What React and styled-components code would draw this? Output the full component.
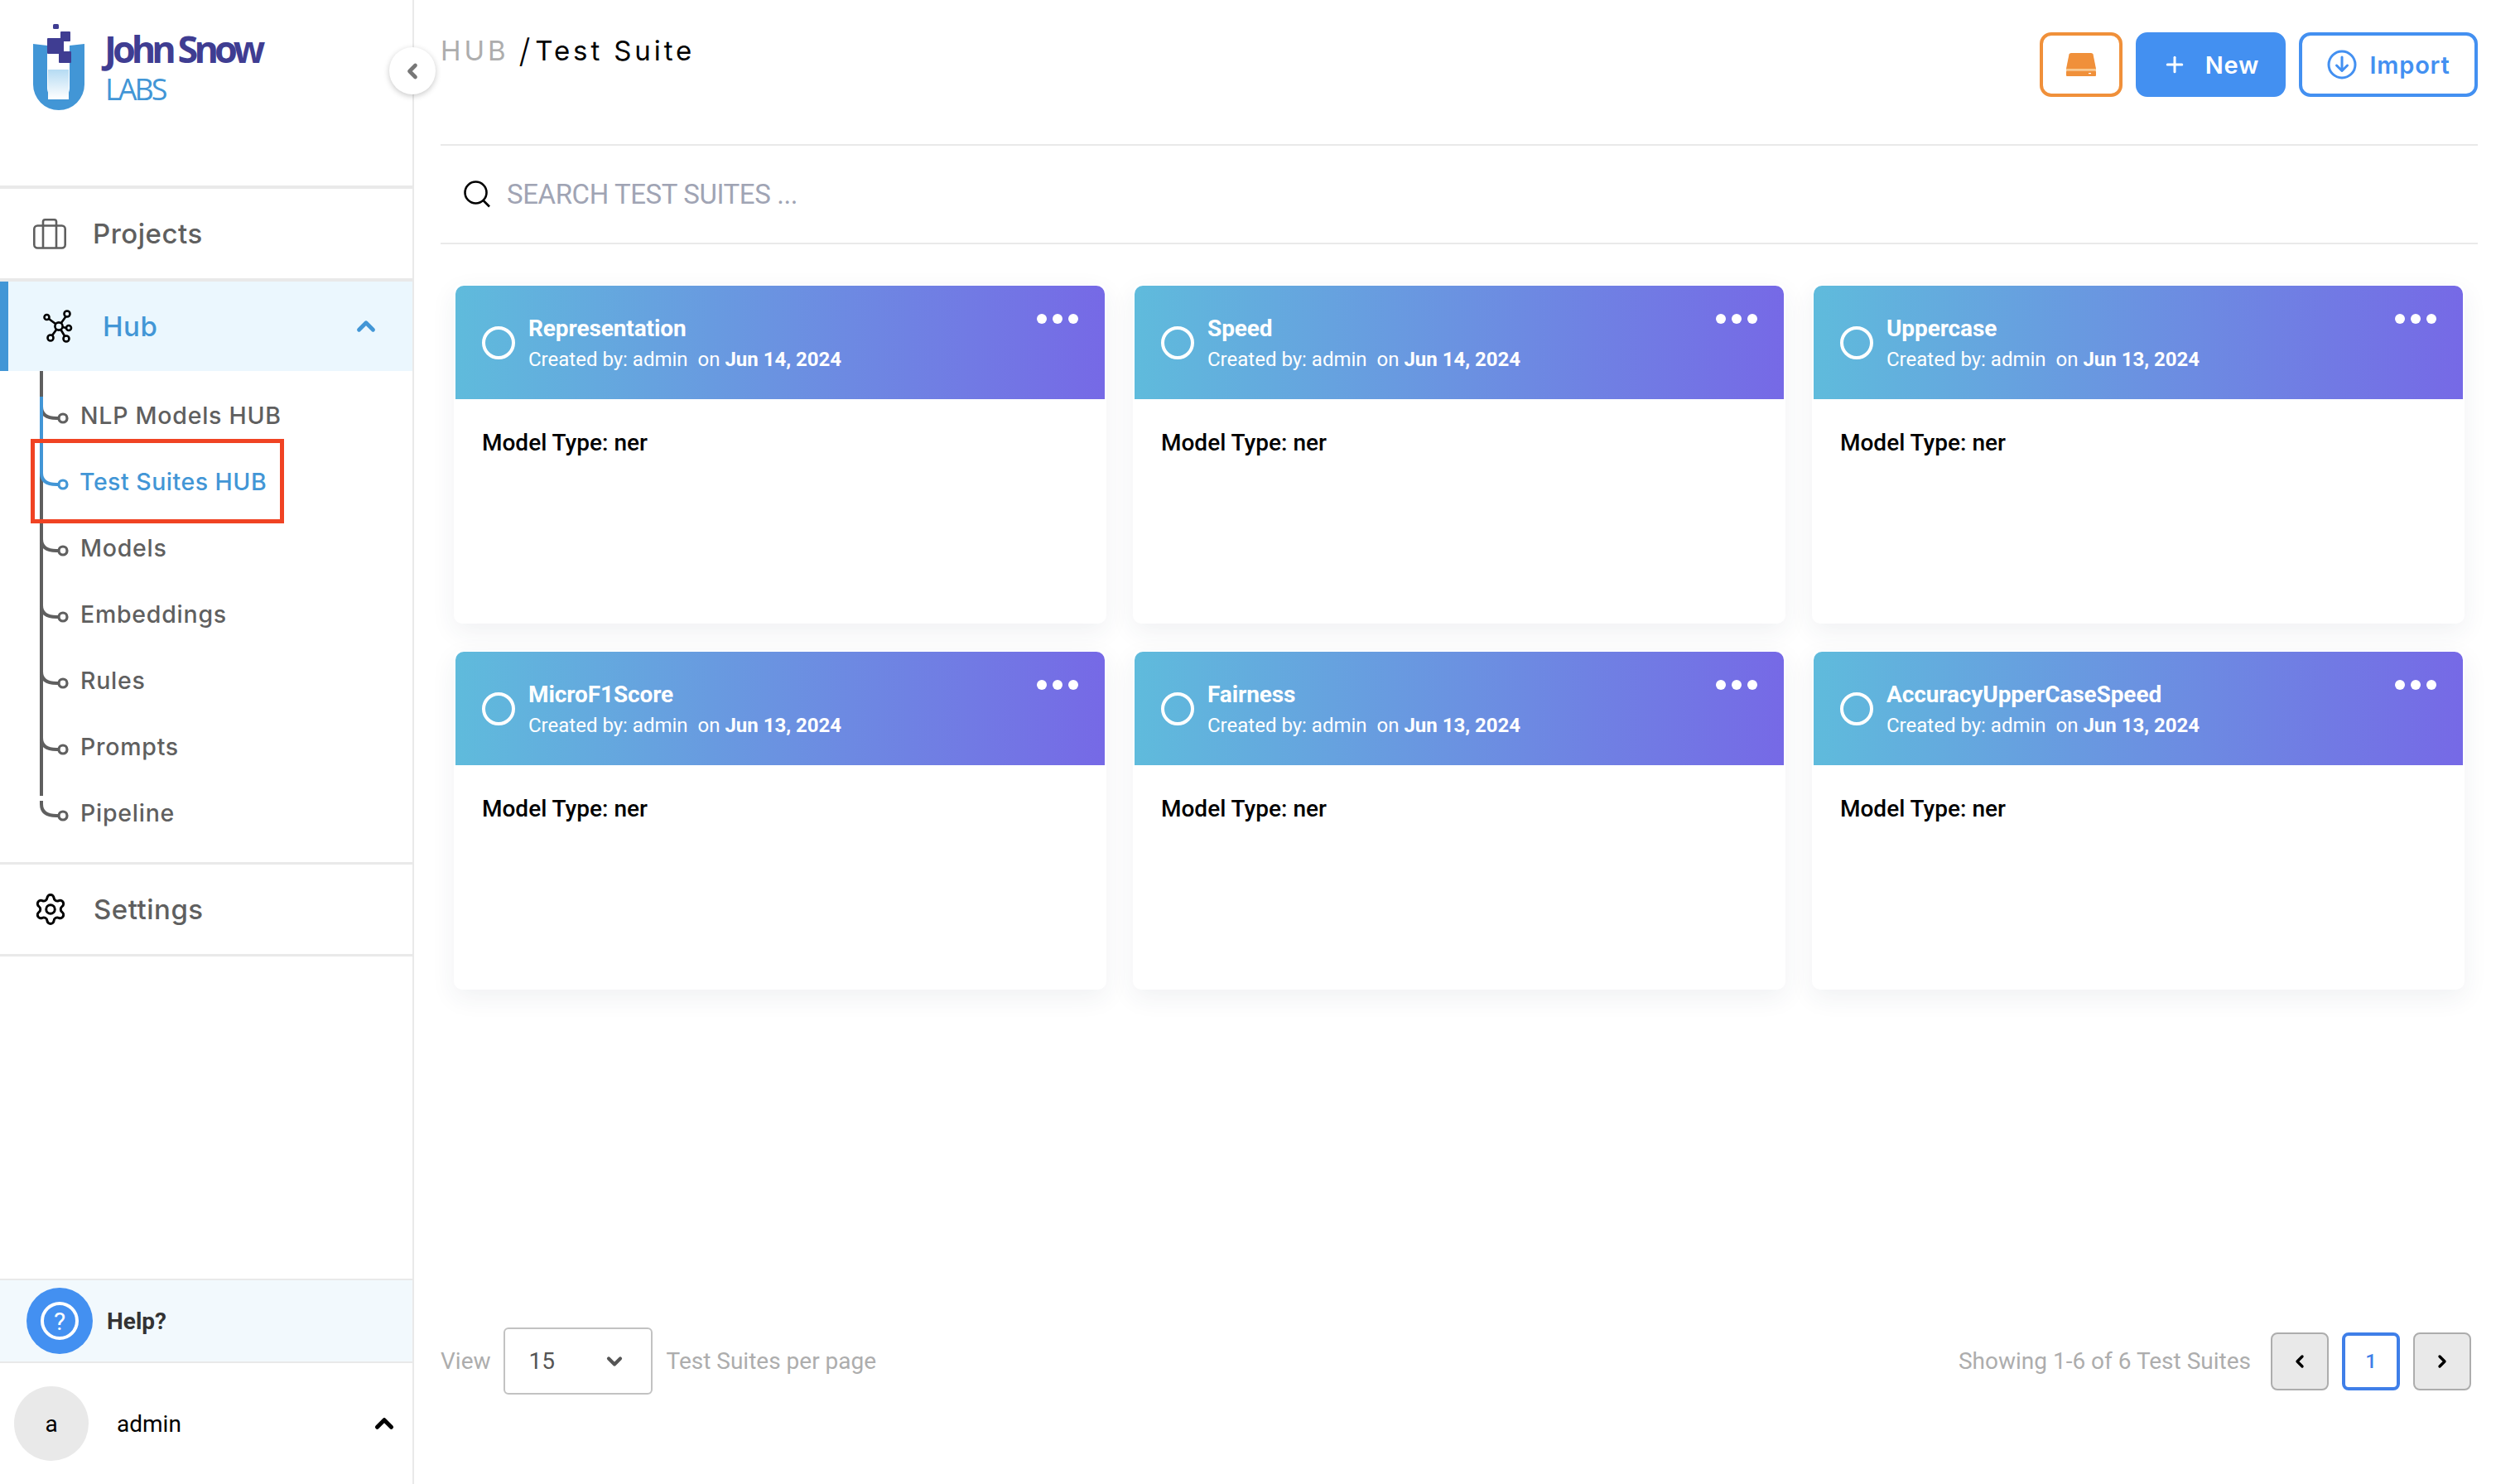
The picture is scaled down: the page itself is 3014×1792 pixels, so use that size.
import React from 'react';
import styled, { createGlobalStyle } from 'styled-components';
import { ChevronDown, ChevronLeft, ChevronRight, ChevronUp, Plus, Settings } from 'lucide-react';

const colors = {
  blue: '#4296d6',
  brand: '#4390f1',
  indigo: '#3f3d92',
  text: '#5f5f5f',
  line: '#e9e9e9',
  muted: '#adadad',
};

const sans = '"Inter", "Liberation Sans", sans-serif';
const roboto = 'Roboto, "Liberation Sans", sans-serif';

const GlobalStyle = createGlobalStyle`
  html, body {
    margin: 0;
    padding: 0;
    background: #fff;
    overflow: hidden;
  }
  * {
    box-sizing: border-box;
  }
`;

const Page = styled.div`
  display: flex;
  width: 3014px;
  height: 1792px;
  font-family: ${roboto};
`;

const Sidebar = styled.aside`
  position: relative;
  display: flex;
  flex-direction: column;
  flex: 0 0 500px;
  height: 100%;
  border-right: 2px solid ${colors.line};
`;

const LogoArea = styled.div`
  display: flex;
  gap: 24px;
  height: 224px;
  padding: 28px 0 0 40px;
`;

const LogoWords = styled.div`
  display: flex;
  flex-direction: column;
  padding-top: 6px;
`;

const LogoName = styled.span`
  font-family: "Open Sans", sans-serif;
  font-size: 45px;
  font-weight: 700;
  line-height: 50px;
  letter-spacing: -5px;
  color: ${colors.indigo};
`;

const LogoLabs = styled.span`
  font-family: "Open Sans", sans-serif;
  font-size: 36px;
  font-weight: 400;
  line-height: 48px;
  letter-spacing: -3px;
  color: ${colors.blue};
  margin-left: 1px;
`;

const CollapseButton = styled.button`
  position: absolute;
  top: 57px;
  right: -28px;
  z-index: 3;
  display: flex;
  align-items: center;
  justify-content: center;
  width: 56px;
  height: 57px;
  padding: 0;
  border: 0;
  border-radius: 50%;
  background: #fff;
  color: #777;
  box-shadow: 0 2px 7px rgba(0, 0, 0, 0.22);
`;

const NavRow = styled.div`
  display: flex;
  align-items: center;
  height: 112px;
  padding-left: 40px;
  border-top: 4px solid ${colors.line};
  background: #fff;
  color: ${colors.text};
`;

const ActiveBand = styled(NavRow)`
  padding: 0;
`;

const ActiveFill = styled.div`
  display: flex;
  align-items: center;
  width: 100%;
  height: 100%;
  padding: 0 39px 0 42px;
  border-left: 10px solid ${colors.blue};
  background: #ebf7fe;
  color: ${colors.blue};
`;

const NavLabel = styled.span`
  margin-left: ${p => p.$gap || 32}px;
  font-family: ${sans};
  font-size: 33px;
  font-weight: 500;
  letter-spacing: 0.5px;
  flex: ${p => p.$grow ? 1 : 'none'};
`;

const TreeList = styled.div`
  position: relative;
  display: flex;
  flex-direction: column;
  flex: 0 0 593px;
  padding-top: 13px;

  &::before {
    content: "";
    position: absolute;
    left: 48px;
    top: 0;
    bottom: 80px;
    width: 4px;
    background: ${colors.text};
  }
`;

const TreeItem = styled.div`
  position: relative;
  display: flex;
  align-items: center;
  height: 80px;
  color: ${p => p.$active ? colors.blue : colors.text};
`;

const Branch = styled.svg`
  position: relative;
  flex: 0 0 97px;
  width: 97px;
  height: 80px;
  overflow: visible;
`;

const TreeLabel = styled.span`
  font-family: ${sans};
  font-size: 28.5px;
  font-weight: 500;
  letter-spacing: ${p => p.$active ? 0.5 : 0.75}px;
  margin-left: ${p => p.$active ? -1 : 0}px;
`;

const Annotation = styled.div`
  position: absolute;
  left: 37px;
  top: -11px;
  width: 306px;
  height: 102px;
  border: 5px solid #f04323;
`;

const SettingsRow = styled(NavRow)`
  height: 114px;
  border-top-width: 3px;
  border-bottom: 3px solid ${colors.line};
`;

const HelpBand = styled.div`
  display: flex;
  align-items: center;
  gap: 17px;
  margin-top: auto;
  height: 102px;
  padding-left: 32px;
  border-top: 2px solid ${colors.line};
  border-bottom: 2px solid ${colors.line};
  background: #f2f9fd;
  font-size: 28px;
  font-weight: 700;
  color: #333;
`;

const HelpDisc = styled.div`
  display: flex;
  align-items: center;
  justify-content: center;
  width: 80px;
  height: 80px;
  border-radius: 50%;
  background: ${colors.brand};
`;

const HelpRing = styled.div`
  display: flex;
  align-items: center;
  justify-content: center;
  width: 46px;
  height: 46px;
  border: 4px solid #fff;
  border-radius: 50%;
  color: #fff;
  font-size: 30px;
  font-weight: 400;
`;

const UserRow = styled.div`
  display: flex;
  align-items: center;
  height: 146px;
  padding: 0 17px;
  font-size: 28px;
  color: #000;
`;

const Avatar = styled.div`
  display: flex;
  align-items: center;
  justify-content: center;
  width: 90px;
  height: 90px;
  margin-right: 34px;
  border-radius: 50%;
  background: ${colors.line};
`;

const UserName = styled.span`
  flex: 1;
`;

const Main = styled.main`
  display: flex;
  flex-direction: column;
  flex: 1;
  min-width: 0;
  padding: 0 22px 0 32px;
`;

const TopBar = styled.header`
  display: flex;
  justify-content: space-between;
  height: 176px;
  padding-top: 39px;
  border-bottom: 2px solid ${colors.line};
`;

const Crumbs = styled.div`
  display: flex;
  align-items: center;
  height: 44px;
  font-family: ${sans};
  font-size: 33px;
  letter-spacing: 3.9px;
  color: #000;
`;

const CrumbRoot = styled.span`
  color: ${colors.muted};
  margin-right: 12px;
`;

const CrumbSlash = styled.span`
  font-size: 40px;
  font-weight: 300;
  margin-right: 6px;
  letter-spacing: 0;
`;

const Actions = styled.div`
  display: flex;
  gap: 16px;
`;

const ActionButton = styled.button`
  display: flex;
  align-items: center;
  justify-content: center;
  gap: ${p => p.$gap || 0}px;
  width: ${p => p.$width}px;
  height: 78px;
  padding: 0;
  border: 4px solid ${p => p.$color};
  border-radius: 14px;
  background: ${p => p.$solid ? p.$color : '#fff'};
  color: ${p => p.$solid ? '#fff' : p.$color};
  font-family: ${sans};
  font-size: 29px;
  font-weight: 600;
  letter-spacing: 0.8px;
`;

const SearchBar = styled.div`
  display: flex;
  align-items: center;
  gap: 19px;
  height: 119px;
  padding-left: 28px;
  border-bottom: 2px solid ${colors.line};
`;

const SearchHint = styled.span`
  font-size: 33px;
  color: #a0a4b4;
  letter-spacing: -0.4px;
`;

const CardGrid = styled.section`
  display: grid;
  grid-template-columns: repeat(3, 1fr);
  gap: 32px;
  padding: 48px 16px 0;
`;

const Card = styled.article`
  height: 410px;
  padding: 2px 2px 0;
  border-radius: 10px;
  background: #fff;
  box-shadow: 0 10px 30px rgba(40, 50, 90, 0.07);
`;

const CardHeader = styled.div`
  display: flex;
  align-items: center;
  gap: 16px;
  height: 137px;
  padding: 0 32px;
  border-radius: 10px 10px 0 0;
  background: linear-gradient(90deg, #5fbbdc 0%, #7669e6 100%);
  color: #fff;
`;

const Radio = styled.span`
  flex: none;
  width: 40px;
  height: 40px;
  border: 4px solid #fff;
  border-radius: 50%;
`;

const CardTitles = styled.div`
  display: flex;
  flex-direction: column;
  gap: 6px;
  flex: 1;
  padding-top: 2px;
`;

const CardTitle = styled.span`
  font-size: 28px;
  font-weight: 700;
  line-height: 32px;
  letter-spacing: -0.1px;
`;

const CardMeta = styled.span`
  font-size: 24px;
  line-height: 30px;
  white-space: pre;

  b {
    font-weight: 700;
  }
`;

const Dots = styled.div`
  display: flex;
  gap: 7px;
  align-self: flex-start;
  padding-top: 34px;
`;

const Dot = styled.span`
  width: 12px;
  height: 12px;
  border-radius: 50%;
  background: #fff;
`;

const CardBody = styled.div`
  padding: 33px 32px;
  font-size: 28px;
  font-weight: 500;
  line-height: 40px;
  color: #000;
`;

const Footer = styled.footer`
  display: flex;
  align-items: center;
  justify-content: space-between;
  margin-top: auto;
  padding: 0 8px 108px 0;
`;

const PerPage = styled.div`
  display: flex;
  align-items: center;
  gap: 15px;
  font-size: 28px;
  color: ${colors.muted};
`;

const SelectBox = styled.div`
  display: flex;
  align-items: center;
  justify-content: space-between;
  width: 180px;
  height: 81px;
  margin-right: 2px;
  padding: 0 30px 0 29px;
  border: 2px solid #c2c2c2;
  border-radius: 6px;
  color: #555;
`;

const Pager = styled.div`
  display: flex;
  align-items: center;
  gap: 16px;
  font-size: 28px;
  color: ${colors.muted};
`;

const PageCount = styled.span`
  margin-right: 8px;
`;

const PageButton = styled.div`
  display: flex;
  align-items: center;
  justify-content: center;
  width: 70px;
  height: 70px;
  border: ${p => p.$current ? '4px solid #3f7fe8' : `2px solid ${colors.muted}`};
  border-radius: 8px;
  background: ${p => p.$current ? '#fff' : colors.line};
  color: ${p => p.$current ? '#3f7fe8' : '#000'};
  font-size: 24px;
  font-weight: 500;
`;

const LogoMark = () => (
  <svg width="62" height="106" viewBox="0 0 62 106">
    <defs>
      <linearGradient id="liquid" x1="0" y1="0" x2="0" y2="1">
        <stop offset="0" stopColor="#b5dbf3" />
        <stop offset="1" stopColor="#ffffff" />
      </linearGradient>
    </defs>
    <path d="M0 25 L17 27 V78.5 A13.5 13.5 0 0 0 44 78.5 V27 L62 25 V74 A31 31 0 0 1 0 74 Z" fill={colors.blue} />
    <rect x="18" y="56" width="25" height="36" fill="url(#liquid)" />
    <rect x="24" y="1" width="7" height="6" rx="1.5" fill={colors.indigo} />
    <rect x="33" y="10" width="12" height="12" rx="1" fill={colors.indigo} />
    <rect x="17" y="18" width="20" height="19" rx="1" fill={colors.indigo} />
    <rect x="31" y="34" width="15" height="14" rx="1" fill={colors.indigo} />
  </svg>
);

const BriefcaseIcon = () => (
  <svg width="40" height="37" viewBox="0 0 40 37" fill="none" stroke={colors.text} strokeWidth="2.6" strokeLinejoin="round">
    <rect x="1.3" y="8.5" width="37.4" height="27" rx="4" />
    <path d="M12 35 V3.5 A2.5 2.5 0 0 1 14.5 1.3 H25.5 A2.5 2.5 0 0 1 28 3.5 V35" />
  </svg>
);

const HubIcon = () => (
  <svg width="36" height="40" viewBox="0 0 36 40" fill="none" stroke="#000" strokeWidth="2.6">
    <path d="M19 20 L28 7.5 M19 20 L7 11 M19 20 L28 22 M19 20 L26.5 32.5 M19 20 L11 31" />
    <circle cx="19" cy="20" r="4.6" fill="#ebf7fe" />
    <circle cx="29" cy="5" r="3.5" fill="#ebf7fe" />
    <circle cx="4.5" cy="9" r="3" fill="#ebf7fe" />
    <circle cx="31" cy="22" r="3" fill="#ebf7fe" />
    <circle cx="28" cy="35" r="3.5" fill="#ebf7fe" />
    <circle cx="9" cy="34" r="3.5" fill="#ebf7fe" />
  </svg>
);

const SearchIcon = () => (
  <svg width="33" height="33" viewBox="0 0 33 33" fill="none" stroke="#000" strokeWidth="2.6">
    <circle cx="14.5" cy="14.5" r="13" />
    <path d="M23.5 24 L31 31.5" />
  </svg>
);

const DriveIcon = () => (
  <svg width="36" height="28" viewBox="0 0 36 28">
    <path d="M3.5 1.5 Q4 0 6 0 H30 Q32 0 32.5 1.5 L36 19 H0 Z" fill="#f0903a" />
    <rect y="19" width="36" height="2.5" fill="#f8c98f" />
    <rect y="21.5" width="36" height="6.5" rx="1" fill="#f0903a" />
    <rect x="27" y="24" width="3" height="1.2" fill="#fff" />
  </svg>
);

const ImportIcon = () => (
  <svg width="36" height="36" viewBox="0 0 36 36" fill="none" stroke={colors.brand} strokeWidth="3">
    <circle cx="18" cy="18" r="16" />
    <path d="M18 9 V25 M11.5 19 L18 25.5 L24.5 19" strokeLinecap="round" strokeLinejoin="round" />
  </svg>
);

const BranchLine = ({ active, last }) => {
  const stroke = active ? colors.blue : colors.text;
  return (
    <Branch viewBox="0 0 97 80">
      {active && <path d="M50 -62 V30" stroke={stroke} strokeWidth="4" fill="none" />}
      <path d={`M50 ${last ? 26 : 24} V30 Q50 44 68 44 H71`} stroke={stroke} strokeWidth="4" fill="none" />
      <circle cx="76" cy="44" r="5" stroke={stroke} strokeWidth="3.2" fill="#fff" />
    </Branch>
  );
};

const hubItems = ['NLP Models HUB', 'Test Suites HUB', 'Models', 'Embeddings', 'Rules', 'Prompts', 'Pipeline'];

const suites = [
  { name: 'Representation', date: 'Jun 14, 2024' },
  { name: 'Speed', date: 'Jun 14, 2024' },
  { name: 'Uppercase', date: 'Jun 13, 2024' },
  { name: 'MicroF1Score', date: 'Jun 13, 2024' },
  { name: 'Fairness', date: 'Jun 13, 2024' },
  { name: 'AccuracyUpperCaseSpeed', date: 'Jun 13, 2024' },
];

const SuiteCard = ({ suite }) => (
  <Card>
    <CardHeader>
      <Radio />
      <CardTitles>
        <CardTitle>{suite.name}</CardTitle>
        <CardMeta>Created by: admin  on <b>{suite.date}</b></CardMeta>
      </CardTitles>
      <Dots>
        <Dot />
        <Dot />
        <Dot />
      </Dots>
    </CardHeader>
    <CardBody>Model Type: ner</CardBody>
  </Card>
);

const App = () => {
  return (
    <Page>
      <GlobalStyle />
      <Sidebar>
        <LogoArea>
          <LogoMark />
          <LogoWords>
            <LogoName>John Snow</LogoName>
            <LogoLabs>LABS</LogoLabs>
          </LogoWords>
        </LogoArea>
        <CollapseButton>
          <ChevronLeft size={28} strokeWidth={4} />
        </CollapseButton>
        <NavRow>
          <BriefcaseIcon />
          <NavLabel>Projects</NavLabel>
        </NavRow>
        <ActiveBand>
          <ActiveFill>
            <HubIcon />
            <NavLabel $gap={36} $grow>Hub</NavLabel>
            <ChevronUp size={34} strokeWidth={3.4} />
          </ActiveFill>
        </ActiveBand>
        <TreeList>
          {hubItems.map((item, i) => (
            <TreeItem key={item} $active={i === 1}>
              <BranchLine active={i === 1} last={i === hubItems.length - 1} />
              <TreeLabel $active={i === 1}>{item}</TreeLabel>
              {i === 1 && <Annotation />}
            </TreeItem>
          ))}
        </TreeList>
        <SettingsRow>
          <Settings size={42} strokeWidth={1.7} color="#000" />
          <NavLabel $gap={31}>Settings</NavLabel>
        </SettingsRow>
        <HelpBand>
          <HelpDisc>
            <HelpRing>?</HelpRing>
          </HelpDisc>
          Help?
        </HelpBand>
        <UserRow>
          <Avatar>a</Avatar>
          <UserName>admin</UserName>
          <ChevronUp size={34} strokeWidth={3.6} />
        </UserRow>
      </Sidebar>
      <Main>
        <TopBar>
          <Crumbs>
            <CrumbRoot>HUB</CrumbRoot>
            <CrumbSlash>/</CrumbSlash>
            Test Suite
          </Crumbs>
          <Actions>
            <ActionButton $width={100} $color="#f0903a"><DriveIcon /></ActionButton>
            <ActionButton $width={181} $color={colors.brand} $solid $gap={22}>
              <Plus size={30} strokeWidth={2.4} />
              New
            </ActionButton>
            <ActionButton $width={216} $color={colors.brand} $gap={16}>
              <ImportIcon />
              Import
            </ActionButton>
          </Actions>
        </TopBar>
        <SearchBar>
          <SearchIcon />
          <SearchHint>SEARCH TEST SUITES ...</SearchHint>
        </SearchBar>
        <CardGrid>
          {suites.map(suite => <SuiteCard key={suite.name} suite={suite} />)}
        </CardGrid>
        <Footer>
          <PerPage>
            View
            <SelectBox>
              15
              <ChevronDown size={28} strokeWidth={3.6} color="#555" />
            </SelectBox>
            Test Suites per page
          </PerPage>
          <Pager>
            <PageCount>Showing 1-6 of 6 Test Suites</PageCount>
            <PageButton><ChevronLeft size={24} strokeWidth={3.4} /></PageButton>
            <PageButton $current>1</PageButton>
            <PageButton><ChevronRight size={24} strokeWidth={3.4} /></PageButton>
          </Pager>
        </Footer>
      </Main>
    </Page>
  );
};

export default App;
